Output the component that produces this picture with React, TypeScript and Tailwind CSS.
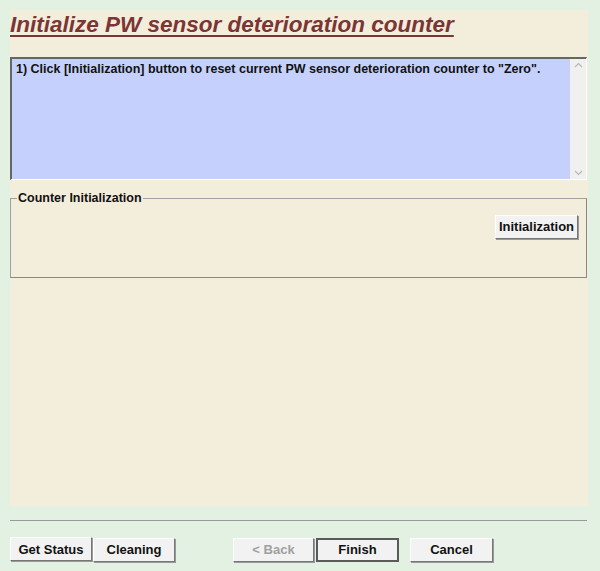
import React from "react";

const font = { fontFamily: '"Liberation Sans", Arial, sans-serif' };

// Win-classic style raised button
const Btn: React.FC<{ label: string; w: string; disabled?: boolean; primary?: boolean }> = ({
  label,
  w,
  disabled,
  primary,
}) => (
  <button
    className={
      primary
        ? `${w} h-6 border-2 border-[#5a5a5a] bg-[#f2f2f2] text-[13px] font-bold text-[#111]`
        : `${w} h-6 border border-t-white border-l-white border-r-[#777] border-b-[#777] bg-[#f2f2f2] text-[13px] font-bold shadow-[1px_1px_0_#999] ${
            disabled ? "text-[#a0a0a0]" : "text-[#111]"
          }`
    }
  >
    {label}
  </button>
);

export default function App() {
  return (
    <div className="h-[571px] w-[600px] bg-[#e3f1e3] pl-[10px] pt-[10px] pr-[12px]" style={font}>
      {/* main panel */}
      <div className="flex h-[496px] flex-col bg-[#f3eedb]">
        <h1 className="pt-[1px] text-[22.5px] leading-[28px] font-bold italic text-[#7b3535] underline decoration-[2px] underline-offset-[3px]">
          Initialize PW sensor deterioration counter
        </h1>

        {/* message box */}
        <div className="mt-[18px] flex h-[123px] w-[577px] border-t-2 border-l-2 border-t-[#666] border-l-[#666] border-b border-r border-b-white border-r-white bg-[#c5d1fc]">
          <div className="flex-1 px-[4px] pt-[1px] text-[12.5px] font-bold text-[#111]">
            1) Click [Initialization] button to reset current PW sensor deterioration counter to "Zero".
          </div>
          <div className="flex w-[16px] flex-col items-center justify-between bg-[#f0f0f0] py-[3px] text-[#b0b0b0]">
            <svg width="9" height="6" viewBox="0 0 9 6">
              <path d="M1 5 L4.5 1.5 L8 5" fill="none" stroke="#b8b8b8" strokeWidth="1.2" />
            </svg>
            <svg width="9" height="6" viewBox="0 0 9 6">
              <path d="M1 1 L4.5 4.5 L8 1" fill="none" stroke="#b8b8b8" strokeWidth="1.2" />
            </svg>
          </div>
        </div>

        {/* group box */}
        <fieldset className="mt-[9px] h-[89px] w-[577px] border border-t-[#a0a0a0] border-l-[#a0a0a0] border-r-[#888] border-b-[#888] px-[6px]">
          <legend className="px-[1px] text-[12.5px] font-bold text-[#111]">Counter Initialization</legend>
          <div className="mt-[7px] flex justify-end pr-[2px]">
            <Btn label="Initialization" w="w-[83px]" />
          </div>
        </fieldset>
      </div>

      {/* footer */}
      <div className="mt-[14px] h-px w-[577px] bg-[#999]" />
      <div className="mt-[16px] flex w-[577px] items-center">
        <Btn label="Get Status" w="w-[82px]" />
        <div className="ml-[1px]">
          <Btn label="Cleaning" w="w-[82px]" />
        </div>
        <div className="ml-[58px]">
          <Btn label="< Back" w="w-[81px]" disabled />
        </div>
        <div className="ml-[2px]">
          <Btn label="Finish" w="w-[83px]" primary />
        </div>
        <div className="ml-[11px]">
          <Btn label="Cancel" w="w-[83px]" />
        </div>
      </div>
    </div>
  );
}
